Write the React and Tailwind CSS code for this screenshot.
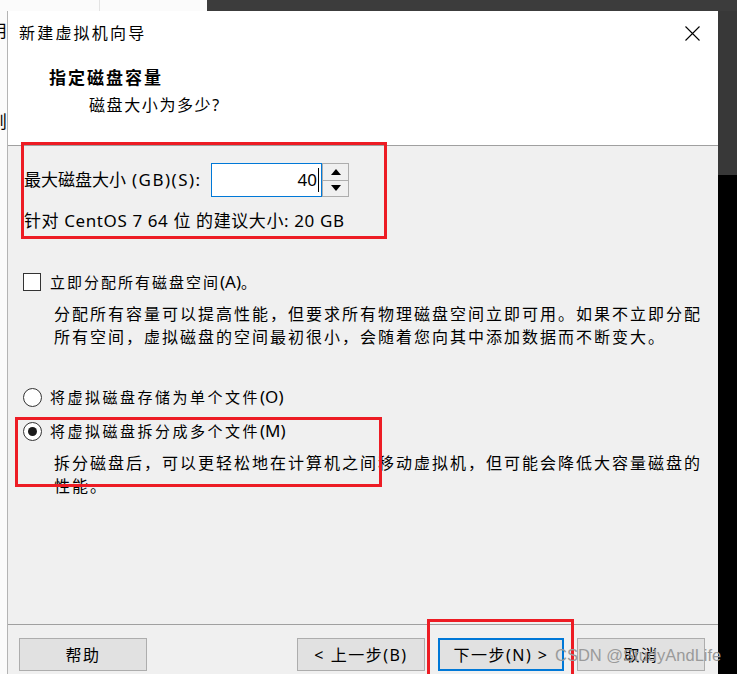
const font = { fontFamily: '"Noto Sans", "Noto Sans CJK SC", sans-serif' }

const Radio = ({ checked }) => (
  <div className="w-[19px] h-[19px] rounded-full border border-[#333] bg-white flex items-center justify-center">
    {checked && <div className="w-[9px] h-[9px] rounded-full bg-[#1a1a1a]" />}
  </div>
)

const Button = ({ children, primary }) => (
  <div
    className={
      'h-[33px] flex items-center justify-center bg-[#e1e1e1] text-[16px] tracking-[1.5px] text-black ' +
      (primary ? 'w-[126px] border-2 border-[#0078d7]' : 'w-[128px] border border-[#adadad]')
    }
  >
    {children}
  </div>
)

export default function App() {
  return (
    <div className="relative w-[737px] h-[674px] overflow-hidden flex flex-col bg-black" style={font}>
      {/* strip above the dialog */}
      <div className="h-[11px] flex shrink-0">
        <div className="w-[100px] bg-[#fbfbfb] border-r border-[#e3e3e3]" />
        <div className="w-[107px] bg-[#fbfbfb]" />
        <div className="flex-1 bg-[#3c3c3c]" />
      </div>

      <div className="flex flex-1 min-h-0">
        {/* window behind, left edge */}
        <div className="w-[7px] bg-[#fbfbfb] overflow-hidden text-[17px] leading-none text-black">
          <div className="ml-[-10px] mt-[11px]">用</div>
          <div className="ml-[-10px] mt-[74px]">则</div>
        </div>

        {/* dialog */}
        <div className="w-[711px] flex flex-col border-l border-[#b4b4b4]">
          {/* header */}
          <div className="h-[135px] shrink-0 bg-white border-b border-[#a0a0a0] flex flex-col">
            <div className="mt-[11px] h-[22px] flex items-center justify-between pl-[11px] pr-[18px]">
              <span className="text-[16px] tracking-[2.2px] text-black">新建虚拟机向导</span>
              <svg width="15" height="15" viewBox="0 0 15 15" className="mt-[1px]">
                <path d="M0.5 0.5 L14.5 14.5 M14.5 0.5 L0.5 14.5" stroke="#000" strokeWidth="1.1" fill="none" />
              </svg>
            </div>
            <div className="mt-[22px] h-[24px] pl-[41px] flex items-center text-[17px] font-bold tracking-[2px] text-black">
              指定磁盘容量
            </div>
            <div className="mt-[4px] h-[22px] pl-[81px] flex items-center text-[16px] tracking-[1.6px] text-black">
              磁盘大小为多少?
            </div>
          </div>

          {/* body */}
          <div className="flex-1 bg-[#f0f0f0] flex flex-col text-black">
            <div className="mt-[17px] ml-[16px] flex items-center h-[34px]">
              <span className="w-[187px] text-[17px] whitespace-nowrap">
                最大磁盘大小<span className="tracking-[1.5px]"> (GB)(S):</span>
              </span>
              <div className="w-[111px] h-[34px] bg-white border border-[#0078d7] flex items-center justify-end pr-[2px]">
                <span className="text-[17px]">40</span>
                <span className="w-[1px] h-[24px] bg-black ml-[1px]" />
              </div>
              <div className="w-[27px] h-[34px] border border-[#adadad] flex flex-col bg-[#f0f0f0]">
                <div className="flex-1 border-b border-[#adadad] flex items-center justify-center">
                  <svg width="10" height="6" viewBox="0 0 10 6"><path d="M5 0 L10 6 L0 6 Z" fill="#000" /></svg>
                </div>
                <div className="flex-1 flex items-center justify-center">
                  <svg width="10" height="6" viewBox="0 0 10 6"><path d="M0 0 L10 0 L5 6 Z" fill="#000" /></svg>
                </div>
              </div>
            </div>
            <div className="mt-[13px] ml-[16px] h-[22px] flex items-center text-[17px] tracking-[0.6px] whitespace-nowrap">
              针对 CentOS 7 64 位 的建议大小: 20 GB
            </div>

            <div className="mt-[39px] ml-[15px] h-[22px] flex items-center gap-[9px]">
              <div className="w-[18px] h-[18px] bg-white border border-[#333]" />
              <span className="text-[15px] tracking-[2px]">
                立即分配所有磁盘空间<span className="text-[17px] tracking-normal">(A)</span>。
              </span>
            </div>
            <div className="mt-[10px] ml-[46px] text-[16px] leading-[23px] tracking-[2px]">
              <div>分配所有容量可以提高性能，但要求所有物理磁盘空间立即可用。如果不立即分配</div>
              <div>所有空间，虚拟磁盘的空间最初很小，会随着您向其中添加数据而不断变大。</div>
            </div>

            <div className="mt-[37px] ml-[15px] h-[22px] flex items-center gap-[8px]">
              <Radio />
              <span className="text-[15px] tracking-[2.5px]">
                将虚拟磁盘存储为单个文件<span className="text-[17px] tracking-normal">(O)</span>
              </span>
            </div>
            <div className="mt-[12px] ml-[15px] h-[22px] flex items-center gap-[8px]">
              <Radio checked />
              <span className="text-[15px] tracking-[2.5px]">
                将虚拟磁盘拆分成多个文件<span className="text-[17px] tracking-normal">(M)</span>
              </span>
            </div>
            <div className="mt-[10px] ml-[46px] text-[16px] leading-[23px] tracking-[2px]">
              <div>拆分磁盘后，可以更轻松地在计算机之间移动虚拟机，但可能会降低大容量磁盘的</div>
              <div>性能。</div>
            </div>
          </div>

          {/* footer */}
          <div className="h-[50px] shrink-0 bg-[#f0f0f0] border-t border-[#a0a0a0] pt-[13px] pl-[11px] flex">
            <Button>帮助</Button>
            <div className="ml-[150px] flex gap-[13px]">
              <Button>&lt; 上一步(B)</Button>
              <Button primary>下一步(N) &gt;</Button>
              <Button>取消</Button>
            </div>
          </div>
        </div>

        {/* right edge, behind */}
        <div className="flex-1 flex flex-col">
          <div className="h-[164px] bg-[#383838]" />
          <div className="flex-1 bg-black" />
        </div>
      </div>

      {/* red annotation boxes */}
      <div className="absolute left-[21px] top-[142px] w-[366px] h-[97px] border-[3px] border-[#ed1c24]" />
      <div className="absolute left-[15px] top-[417px] w-[367px] h-[70px] border-[3px] border-[#ed1c24]" />
      <div className="absolute left-[427px] top-[619px] w-[147px] h-[60px] border-[3px] border-[#ed1c24]" />

      {/* watermark */}
      <div
        className="absolute left-[555px] top-[645px] text-[16.5px] leading-[20px] text-[#9a9a9a] whitespace-nowrap"
        style={{ fontFamily: '"Liberation Sans", sans-serif' }}
      >
        CSDN @StudyAndLife
      </div>
    </div>
  )
}
